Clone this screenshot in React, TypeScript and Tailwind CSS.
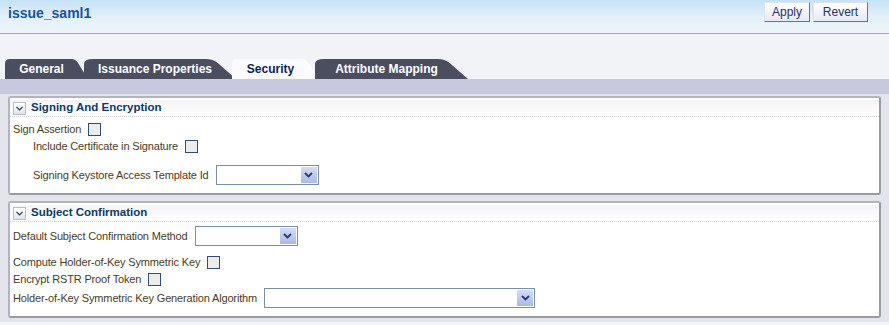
import React from "react";

const FONT = { fontFamily: '"Liberation Sans", Arial, sans-serif' };

function Chevron() {
  return (
    <span className="inline-flex items-center justify-center w-[13px] h-[13px] border border-[#b8bccb] bg-gradient-to-b from-white to-[#dfe3ec] mr-[5px]">
      <svg width="7" height="5" viewBox="0 0 7 5">
        <path d="M0.5 0.8 L3.5 3.8 L6.5 0.8" fill="none" stroke="#2a3350" strokeWidth="1.2" />
      </svg>
    </span>
  );
}

function Checkbox() {
  return <span className="inline-block w-[13px] h-[13px] border border-[#2f4d7a] bg-[#ececec] ml-[7px]" />;
}

function Select({ w }: { w: string }) {
  return (
    <span className={`inline-flex items-center justify-end h-[20px] border border-[#7b8ea8] bg-white ml-[7px] ${w}`}>
      <span className="flex items-center justify-center w-[16px] h-[16px] mr-[1px] bg-gradient-to-b from-[#d4dcf6] to-[#aab8ec]">
        <svg width="9" height="6" viewBox="0 0 9 6">
          <path d="M1 1 L4.5 4.5 L8 1" fill="none" stroke="#2a3a62" strokeWidth="1.8" />
        </svg>
      </span>
    </span>
  );
}

function Tab({ label, active, w, first }: { label: string; active?: boolean; w: string; first?: boolean }) {
  return (
    <div className={`relative h-[20px] ${w} ${first ? "" : "-ml-[4px]"}`}>
      <svg className="absolute inset-0 w-full h-full" preserveAspectRatio="none" viewBox="0 0 100 20">
        <path
          d="M0 20 L0 5 Q0 0 6 0 L80 0 Q85 0 88 4 L100 20 Z"
          fill={active ? "#fbfbfd" : "#4a4e5f"}
        />
      </svg>
      <span
        className={`relative flex h-full items-center justify-center pr-[10px] text-[12px] font-bold ${active ? "text-[#0b1f52]" : "text-white"}`}
      >
        {label}
      </span>
    </div>
  );
}

function Panel({ title, children }: { title: string; children: React.ReactNode }) {
  return (
    <div className="ml-[8px] w-[873px] rounded-[3px] border-2 border-[#b4b4be] border-r-[#9a9aa2] border-b-[#9a9aa2] bg-white">
      <div className="flex items-center h-[17px] px-[3px] mt-[2px] border-b border-dotted border-[#d4d4dc] bg-gradient-to-b from-[#f4f4f8] to-white">
        <Chevron />
        <span className="text-[11.5px] font-bold text-[#0d3b66]">{title}</span>
      </div>
      {children}
    </div>
  );
}

const label = "text-[11px] tracking-[-0.15px] text-[#4b3c1c]";

export default function App() {
  return (
    <div style={FONT} className="w-[889px] h-[325px] overflow-hidden bg-[#f2f3f7]">
      <div className="flex items-center justify-between h-[34px] pl-[8px] pr-[21px] border-b border-[#a7a7b8] bg-gradient-to-b from-[#c4e2f6] via-[#e2f0fa] to-[#eef4f9]">
        <span className="text-[14px] font-bold text-[#1b52a0] -mt-[6px]">issue_saml1</span>
        <div className="flex gap-[3px] -mt-[10px]">
          <button className="h-[20px] w-[46px] text-[12px] text-[#1c3570] border border-[#dfe3ea] border-r-[#6f7380] border-b-[#6f7380] bg-gradient-to-b from-white to-[#e6eaf1]">
            Apply
          </button>
          <button className="h-[20px] w-[55px] text-[12px] text-[#1c3570] border border-[#dfe3ea] border-r-[#6f7380] border-b-[#6f7380] bg-gradient-to-b from-white to-[#e6eaf1]">
            Revert
          </button>
        </div>
      </div>
      <div className="h-[25px]" />
      <div className="flex pl-[5px]">
        <Tab first label="General" w="w-[83px]" />
        <Tab label="Issuance Properties" w="w-[152px]" />
        <Tab active label="Security" w="w-[87px]" />
        <Tab label="Attribute Mapping" w="w-[153px]" />
      </div>
      <div className="h-[15px] bg-[#c8c8de]" />
      <div className="bg-[#e4e4ec] pt-[2px] pb-[4px]">
        <Panel title="Signing And Encryption">
          <div className="pl-[3px] pt-[4px] pb-[8px]">
            <div className="flex items-center h-[17px]">
              <span className={label}>Sign Assertion</span>
              <Checkbox />
            </div>
            <div className="flex items-center h-[17px] pl-[20px]">
              <span className={label}>Include Certificate in Signature</span>
              <Checkbox />
            </div>
            <div className="flex items-center h-[20px] pl-[20px] mt-[10px]">
              <span className={label}>Signing Keystore Access Template Id</span>
              <Select w="w-[103px]" />
            </div>
          </div>
        </Panel>
        <div className="h-[6px]" />
        <Panel title="Subject Confirmation">
          <div className="pl-[3px] pt-[4px] pb-[8px]">
            <div className="flex items-center h-[20px]">
              <span className={label}>Default Subject Confirmation Method</span>
              <Select w="w-[103px]" />
            </div>
            <div className="flex items-center h-[17px] mt-[8px]">
              <span className={label}>Compute Holder-of-Key Symmetric Key</span>
              <Checkbox />
            </div>
            <div className="flex items-center h-[17px]">
              <span className={label}>Encrypt RSTR Proof Token</span>
              <Checkbox />
            </div>
            <div className="flex items-center h-[20px]">
              <span className={label}>Holder-of-Key Symmetric Key Generation Algorithm</span>
              <Select w="w-[271px]" />
            </div>
          </div>
        </Panel>
      </div>
    </div>
  );
}
